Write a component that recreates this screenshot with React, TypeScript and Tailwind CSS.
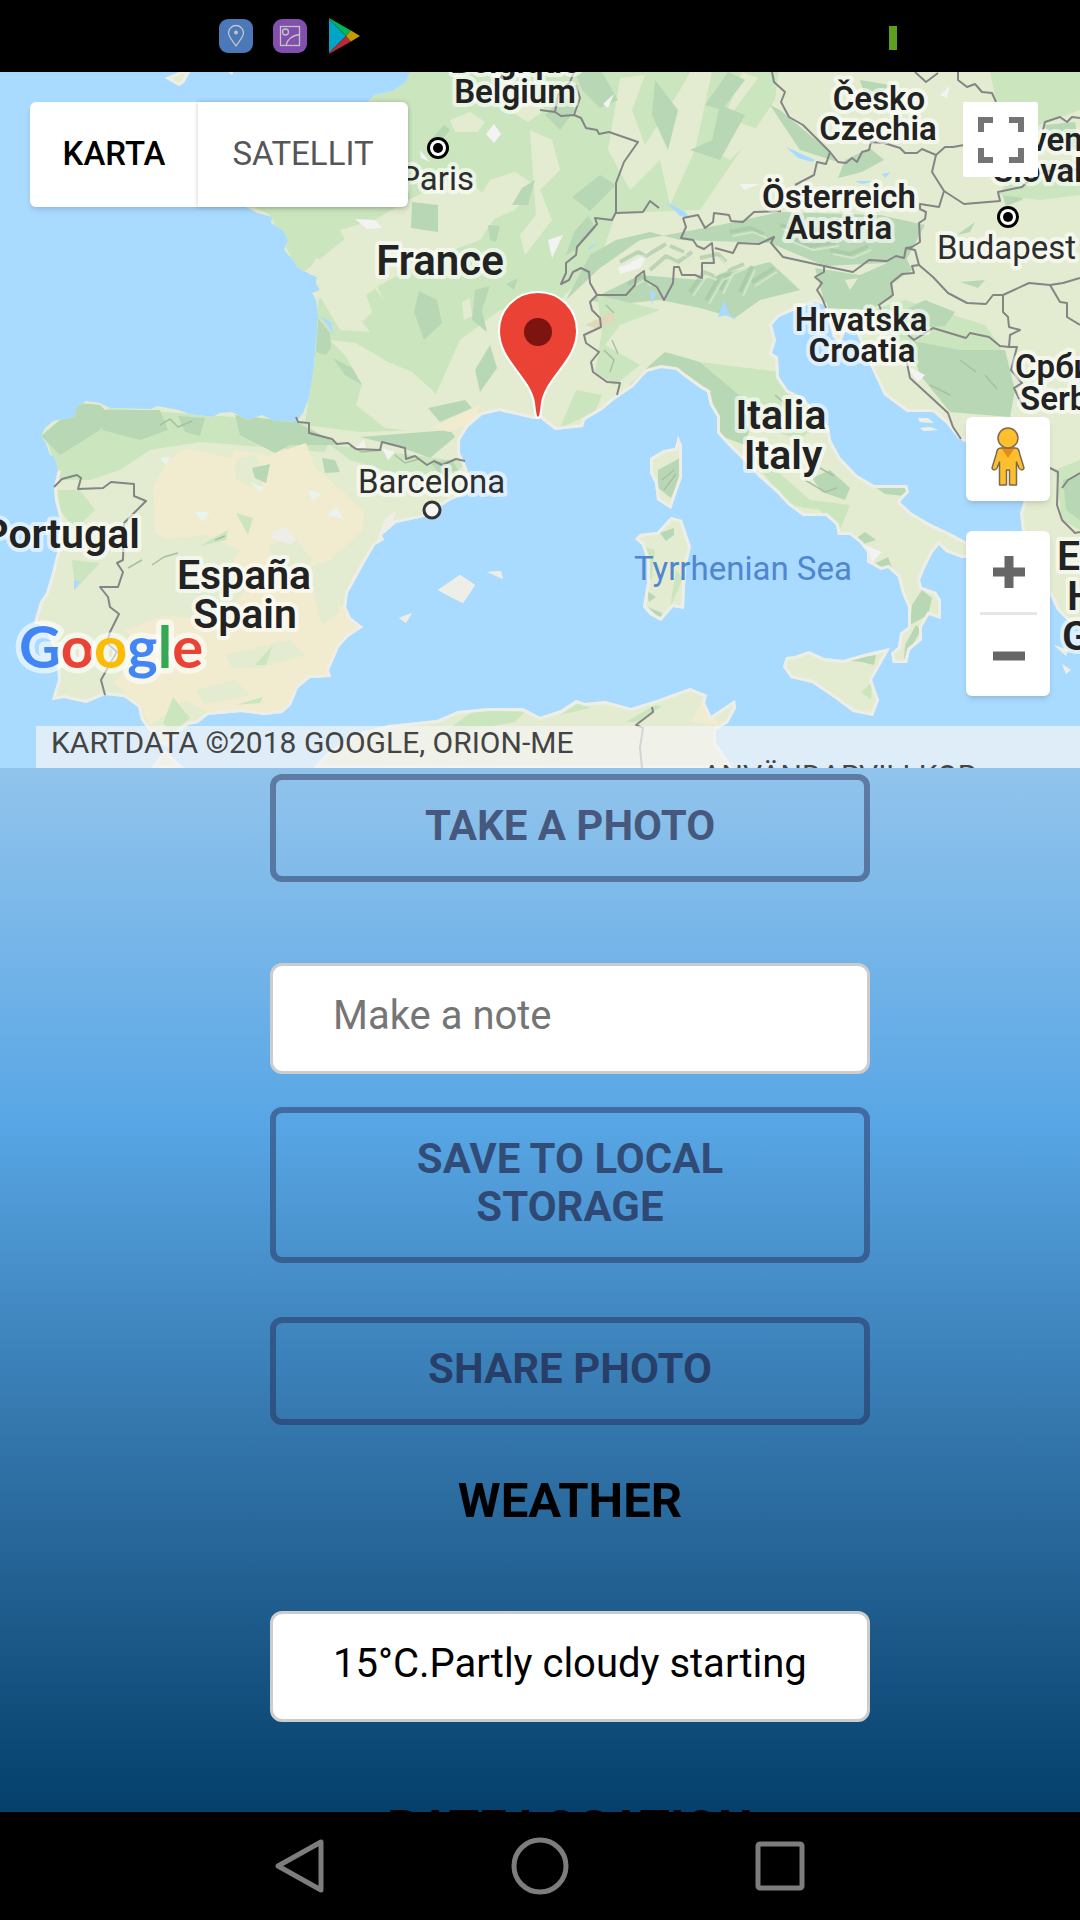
import type { ReactNode } from "react";

const SEA = "#a9daff";
const PALE = "#e3ecd0";
const GREEN = "#cbe6be";
const DARK = "#b7d7b5";
const SAND = "#f1ebcf";
const COAST = "#eeeee8";

const EUROPE =
  "410,72 406,82 393,91 375,95 367,102 340,140 290,150 230,170 220,195 246,207 257,213 272,217 271,223 284,231 288,240 284,250 293,260 298,268 312,275 317,277 316,283 320,290 312,293 316,300 318,315 317,333 315,353 314,367 310,393 308,400 303,413 296,422 275,421 262,415 248,420 232,412 219,413 213,417 189,414 179,410 157,406 151,409 110,408 100,403 86,401 76,408 75,417 53,421 45,428 41,436 46,443 50,455 55,457 58,470 54,487 55,500 60,520 57,553 52,573 46,593 40,602 34,623 45,627 57,657 58,680 52,700 64,698 86,703 105,695 124,697 138,707 141,720 151,733 157,743 169,747 179,733 188,725 198,723 208,715 241,712 265,715 282,713 291,705 298,688 310,678 331,677 329,670 339,647 348,637 363,627 351,618 346,607 348,593 365,562 375,545 384,540 382,535 396,523 424,517 451,500 468,493 470,480 467,468 460,453 460,440 468,427 482,415 499,411 517,415 534,419 540,418 555,430 583,427 585,420 602,410 614,400 633,387 647,372 661,368 676,370 685,377 700,388 707,392 710,405 717,417 717,433 728,445 743,460 759,477 776,492 788,505 803,516 826,516 836,525 838,535 850,535 860,543 867,552 867,562 881,570 888,568 898,577 902,593 908,607 908,627 900,633 898,647 891,653 893,663 907,663 910,650 922,640 922,627 929,615 941,619 941,600 936,592 922,587 920,580 924,570 933,552 939,545 946,552 962,558 980,558 980,545 967,542 950,533 929,523 912,513 900,502 909,492 907,485 874,485 857,475 840,457 831,440 829,427 815,410 802,397 788,390 779,377 778,357 772,353 776,340 772,325 779,317 795,310 815,302 824,305 828,320 833,337 840,345 845,332 857,333 864,353 871,367 878,382 884,395 907,412 933,412 946,423 958,438 967,443 1000,470 1024,501 1020,513 1022,530 1035,570 1051,597 1057,610 1067,620 1080,627 1180,627 1180,72";

const ISLANDS = [
  "678,436 682,445 682,477 671,509 657,500 655,483 650,473 650,458 664,450 675,448",
  "671,517 682,520 691,547 686,567 684,609 673,607 661,621 650,615 643,607 647,583 647,560 642,545 635,539 640,534 657,532",
  "783,667 786,657 795,656 809,651 824,658 843,660 864,654 890,648 872,680 879,700 873,716 853,712 833,697 812,683 791,678",
  "438,590 460,575 475,585 463,603 451,597",
  "399,618 412,613 406,623",
  "487,572 501,571 503,579",
  "165,78 193,66 184,83 179,86",
  "222,66 235,66 232,75",
  "151,768 165,750 184,768",
  "313,768 327,753 358,733 389,725 437,720 458,711 489,708 523,708 540,717 561,710 576,700 585,703 605,701 631,708 657,700 690,688 707,695 705,703 711,716 735,700 736,708 728,723 716,730 716,743 733,768",
  "918,418 928,418 934,423 920,422",
  "920,428 930,427 938,430 924,431",
  "1054,645 1068,650 1066,656",
  "1062,664 1071,670 1066,674",
];

const PATCHES: [string, string][] = [
  [GREEN, "410,60 640,60 780,60 775,100 700,210 616,213 600,260 560,300 500,310 460,340 420,430 360,432 305,425 315,350 318,300 350,270 372,285 384,300 350,235 300,275 270,215 240,200 370,100"],
  [PALE, "340,230 375,220 408,200 440,185 460,172 500,210 480,240 430,258 380,285 366,295 372,312 362,322 370,332 340,330 328,310 308,275 316,258 348,272 357,262"],
  [PALE, "330,340 356,343 388,362 412,372 432,390 440,400 480,372 500,402 470,430 430,433 385,428 356,405 362,384 345,355"],
  [PALE, "490,180 515,172 535,185 515,210 480,225 455,250 430,252 450,222 472,210"],
  [PALE, "530,130 552,140 560,170 540,190 552,220 525,255 520,235 536,215"],
  [PALE, "620,78 645,75 632,110 645,145 680,90 690,72 712,72 695,150 670,205 660,160 630,190 608,150"],
  [PALE, "720,130 742,72 758,78 728,118 760,130 730,160 712,150"],
  [PALE, "800,78 830,72 890,80 905,95 850,90 840,110 805,90"],
  [PALE, "872,150 936,155 932,172 944,191 920,205 885,190 862,170"],
  [PALE, "950,210 1080,200 1080,285 1050,285 1003,295 985,304 948,293 920,262 930,215"],
  [PALE, "450,120 470,112 485,122 478,132 455,132"],
  [PALE, "505,90 530,85 545,110 528,122 512,112"],
  [DARK, "575,72 602,72 618,100 600,108 582,90"],
  [DARK, "655,80 678,110 668,150 652,115"],
  [DARK, "690,150 720,160 745,115 720,105 712,140"],
  [DARK, "705,105 728,72 745,80 722,110"],
  [DARK, "600,175 616,185 590,211 572,197"],
  [DARK, "565,95 575,110 560,130 545,115"],
  [DARK, "566,255 574,232 588,216 596,228 575,250"],
  [DARK, "780,110 830,152 838,162 800,150 770,105"],
  [DARK, "845,160 870,148 884,160 862,172 838,178"],
  [DARK, "860,80 890,85 868,105"],
  [DARK, "1002,193 1030,185 1022,200 1006,206"],
  [DARK, "1045,125 1075,122 1080,150 1050,145"],
  [DARK, "412,202 438,205 438,232 411,228"],
  [DARK, "419,291 437,300 442,323 424,340 414,312"],
  [DARK, "475,290 490,286 482,310 487,332 472,320"],
  [DARK, "488,225 500,226 496,242 490,240"],
  [DARK, "475,370 490,345 497,368 480,392"],
  [DARK, "506,284 518,278 514,290"],
  [PALE, "462,302 470,298 472,316 464,320"],
  [DARK, "318,318 330,333 331,348 326,355 316,352"],
  [DARK, "333,358 352,368 362,385 345,375"],
  [DARK, "444,125 450,130 440,142 433,137"],
  [DARK, "522,188 535,180 528,205 512,205"],
  [DARK, "428,408 465,400 472,408 440,422"],
  [DARK, "566,300 590,255 616,240 650,232 680,240 770,243 825,266 905,262 925,225 880,215 780,212 720,225 640,240 600,268"],
  [DARK, "590,300 640,275 700,280 770,262 800,290 760,300 735,318 700,308 660,300 610,305"],
  [DARK, "815,268 860,275 905,255 912,270 893,283 892,298 870,310 826,308"],
  [PALE, "845,280 858,278 850,290"],
  [DARK, "620,395 650,365 665,352 700,362 740,395 712,392 680,372 650,372"],
  [DARK, "708,392 735,390 755,410 745,445 718,435"],
  [GREEN, "597,295 660,310 620,325 605,345 640,365 615,385 595,372 602,330"],
  [GREEN, "700,362 780,372 800,400 820,420 800,440 770,430 745,400"],
  [GREEN, "745,450 776,470 810,500 850,505 838,535 820,510 788,505"],
  [DARK, "812,478 830,470 850,488 845,500 822,492"],
  [GREEN, "870,310 905,300 985,325 1000,346 1010,390 960,390 915,365"],
  [DARK, "895,315 925,300 955,312 945,326 915,328"],
  [DARK, "908,340 960,350 1005,350 1015,390 1010,417 950,412 920,375"],
  [DARK, "874,486 909,488 905,496 885,494"],
  [DARK, "847,545 865,532 876,540 860,545"],
  [DARK, "872,565 888,557 892,568 880,569"],
  [DARK, "912,605 922,590 932,598 928,615 910,625"],
  [DARK, "905,645 916,625 921,630 904,660"],
  [GREEN, "560,428 576,390 602,395 595,412"],
  [DARK, "658,470 680,458 680,480 671,498 658,488"],
  [GREEN, "645,547 655,550 652,580 646,575"],
  [DARK, "646,590 656,597 649,602"],
  [DARK, "648,607 662,613 661,620"],
  [DARK, "660,533 674,528 674,535 666,541"],
  [GREEN, "676,570 683,578 670,608"],
  [DARK, "842,660 876,655 874,665 862,662"],
  [GREEN, "861,692 872,682 871,700"],
  [GREEN, "45,435 110,408 300,422 330,440 325,452 200,442 150,450 120,470 90,480 60,480"],
  [DARK, "41,436 80,403 100,405 110,415 100,430 60,455"],
  [DARK, "105,410 160,410 168,430 140,440 102,430"],
  [DARK, "178,416 205,418 200,436 185,432"],
  [DARK, "235,415 296,422 340,445 290,445 275,453 240,435"],
  [GREEN, "57,490 80,490 95,510 75,530 60,510"],
  [GREEN, "72,560 100,563 75,590"],
  [SAND, "153,487 169,460 186,448 231,458 234,450 270,455 306,443 315,467 330,480 365,513 362,530 330,560 310,567 315,600 345,607 363,627 339,650 329,675 300,682 288,710 210,714 185,700 150,725 138,705 114,683 140,650 125,630 165,615 220,622 245,590 210,555 155,533"],
  [PALE, "160,540 205,535 240,550 225,575 190,565"],
  [PALE, "268,545 295,538 312,560 300,575 275,562"],
  [PALE, "225,655 290,640 305,655 260,668 232,668"],
  [PALE, "195,690 235,680 250,695 205,704"],
  [PALE, "315,600 330,590 340,612 322,625"],
  [DARK, "322,458 335,460 340,472 325,473"],
  [DARK, "360,437 450,430 455,437 430,458 400,447"],
  [GREEN, "330,445 390,452 450,460 466,462 450,480 400,475 350,460"],
  [DARK, "430,462 452,460 458,470 440,474"],
  [SAND, "430,428 480,405 475,422 450,432"],
  [PALE, "235,460 255,455 265,475 260,490 236,480"],
  [DARK, "252,468 270,464 266,483 255,478"],
  [GREEN, "236,513 253,518 248,535"],
  [GREEN, "210,540 228,530 226,540 200,546"],
  [GREEN, "255,665 273,645 266,665"],
  [GREEN, "236,705 263,697 260,703"],
  [GREEN, "163,723 173,697 190,718 172,733"],
  [COAST, "272,532 285,527 296,540 290,544 270,537"],
  [COAST, "376,545 384,520 396,510 392,525"],
  ["#e9f5ec", "195,512 210,512 202,522"],
  ["#e9f5ec", "308,490 322,494 312,500"],
  ["#e9f5ec", "327,515 337,507 343,519"],
  ["#e9f5ec", "250,482 264,488 260,492"],
  ["#e9f5ec", "160,458 170,457 166,465"],
  ["#f3f3f3", "486,134 494,124 501,134 494,143"],
  ["#f3f3f3", "355,219 375,220 382,228 367,229"],
  ["#f3f3f3", "420,150 430,162 421,158"],
  ["#f3f3f3", "603,104 614,94 608,108"],
  ["#f3f3f3", "740,184 760,184 744,190"],
  ["#f3f3f3", "548,240 563,235 552,258"],
  ["#f3f3f3", "618,268 650,250 640,268 620,274"],
  ["#f3f3f3", "768,90 785,80 774,86"],
  ["#f3f3f3", "940,95 950,86 947,98"],
  ["#f3f3f3", "905,365 925,375 918,382"],
  ["#f3f3f3", "865,545 882,552 872,562"],
  ["#f3f3f3", "356,448 364,440 366,450"],
  ["#f3f3f3", "382,448 395,452 388,460"],
  ["#e0d8b8", "585,325 612,312 616,320 596,328"],
  [SAND, "700,706 712,700 718,725 690,722"],
  [GREEN, "440,735 475,710 525,712 515,722 470,730"],
  [GREEN, "560,715 580,702 590,708"],
  [GREEN, "626,722 655,705 662,706 640,722"],
  [GREEN, "1010,170 1080,160 1080,195 1040,200 1000,195"],
  [GREEN, "1000,120 1040,125 1080,110 1080,72 990,72"],
  [GREEN, "1055,470 1080,460 1080,530 1062,520"],
  [DARK, "1063,480 1080,475 1080,520 1066,510"],
  [DARK, "957,235 975,222 970,232"],
  [DARK, "960,282 985,280 978,288"],
];

const WATER = [
  "666,202 685,212 690,218 680,216",
  "786,147 815,160 812,162 798,158",
  "650,290 656,293 652,304",
  "718,317 724,300 728,312 736,320 726,315",
  "855,181 875,181 862,184",
  "882,174 891,172 885,178",
  "586,250 597,242 592,248",
  "320,316 331,322 334,335 326,323",
  "400,216 415,203 404,212",
  "74,580 80,582 74,590",
];

const BORDERS = [
  "540,110 555,112 561,116 574,115 581,118 586,128 597,130 599,134 609,132 638,142 624,162 616,183 616,212 612,220 595,218 597,224 577,247 576,255 566,263 566,273 561,284 569,280 573,272 581,268 589,272 590,283 597,295 590,302 592,310 600,318 601,327 584,335 586,343 599,352 591,362 593,372 607,382 620,383 617,395",
  "555,112 558,95 570,82 574,72",
  "574,115 580,98 576,85",
  "616,213 643,212 650,201 659,208",
  "683,218 698,215 705,228 713,222 714,213 729,215 731,221 743,222 754,212 781,211",
  "795,185 814,175 817,162 826,164 830,152",
  "772,72 774,82 785,92 781,102 789,117 803,125 830,152 838,162 846,163 852,158 857,162 862,152 869,150 871,142 884,143 900,148 905,153 917,153 922,149 936,155 945,147 953,147 964,145",
  "915,72 926,82 938,73",
  "958,72 958,80 967,87 975,84 982,92 992,93 996,102",
  "936,155 932,172 944,191 939,207 920,204 920,209 926,212 925,219 919,223 920,242 912,247 906,248 904,258 896,256 887,261 869,260 853,272 824,266 783,257 771,243 774,237 759,244 738,243 733,253 715,248",
  "944,191 964,204 1000,201 998,192 1022,187 1035,175 1060,168 1080,170",
  "1043,130 1045,122 1060,117 1067,122 1072,117 1080,118",
  "683,218 686,227 681,238 693,240 697,246 704,249 712,243 714,263 702,263 702,278 695,275 682,275 679,267 674,267 673,283 664,300 657,287 645,280 644,271 636,277 635,285 626,295 597,295",
  "906,248 915,250 919,265 912,266 914,273 902,274 891,283 893,295 879,305 881,310",
  "919,265 933,277 948,293 967,303 986,304 993,295 1003,295 1029,283 1050,285 1063,283 1080,278",
  "1050,285 1060,302 1067,303 1067,317 1080,325",
  "1003,295 1003,312 1008,317 1009,327 1020,330 1010,335 1009,347 1000,346 989,337 970,333 966,338 933,328 914,340 908,335",
  "1009,347 1017,347 1011,370 1022,383 1014,388 1022,405",
  "907,363 910,378 934,400 948,413 953,427 961,439",
  "824,266 824,272 815,277 822,283 817,290 822,298 826,308",
  "296,417 298,422 309,423 309,433 332,439 337,444 348,443 356,449 380,450 382,442 405,448 406,459 415,456 427,465 434,461 442,465 456,459 465,461",
  "54,487 62,479 77,475 81,478 78,489 103,488 111,482 134,484 134,496 146,501 124,523 123,560 117,563 123,572 118,587 100,587 108,597 110,607 119,614 110,632 107,643 117,652 112,660 101,680 105,695",
  "652,707 653,712 636,725 643,728 640,748 642,768",
  "1050,468 1058,472 1057,505 1062,520 1075,533 1080,532",
  "1062,488 1068,480 1080,473",
];

const ALPS =
  "M620 262l18-10 8 4 20-12M628 284l14-8 6 6M650 270l16-14 12 6 14-10M690 292l14-20 10 4M706 300l14-24 10-4M720 290l10-20 14-6M740 292l12-26M752 282l22-14M730 232l20-4 14 6M700 258l18-4 8 8M670 246l14 6M780 225l18 6 24-2M790 238l20 8 26-4M830 250l20 4 18-8";

const HILLS =
  "M604 350l10 10-4 12M606 305l8 8M612 340l6 14M350 446l12 6 20-2M395 455l10 8 14-4M160 425l10-6 8 8 14-6M775 395l14 12M805 480l20 12 12-4M820 468l14 8M930 385l20 10M960 360l16 12M985 375l12 14M662 480l12-10M664 490l12-16M152 565l12-8 14-4M128 568l14-8M215 540l10-4";

type Label = { x: number; y: number; size: number; text: string; bold?: boolean; anchor?: "start" | "middle" | "end" };

const LABELS: Label[] = [
  { x: 515, y: 73, size: 33, text: "Belgique", bold: true, anchor: "middle" },
  { x: 515, y: 103, size: 33, text: "Belgium", bold: true, anchor: "middle" },
  { x: 879, y: 110, size: 33, text: "Česko", bold: true, anchor: "middle" },
  { x: 878, y: 140, size: 33, text: "Czechia", bold: true, anchor: "middle" },
  { x: 983, y: 151, size: 33, text: "Slovensko", bold: true },
  { x: 993, y: 182, size: 33, text: "Slovakia", bold: true },
  { x: 839, y: 208, size: 33, text: "Österreich", bold: true, anchor: "middle" },
  { x: 839, y: 239, size: 33, text: "Austria", bold: true, anchor: "middle" },
  { x: 861, y: 331, size: 33, text: "Hrvatska", bold: true, anchor: "middle" },
  { x: 862, y: 362, size: 33, text: "Croatia", bold: true, anchor: "middle" },
  { x: 1015, y: 378, size: 33, text: "Србија", bold: true },
  { x: 1020, y: 410, size: 33, text: "Serbia", bold: true },
  { x: 440, y: 275, size: 42, text: "France", bold: true, anchor: "middle" },
  { x: 781, y: 429, size: 41, text: "Italia", bold: true, anchor: "middle" },
  { x: 783, y: 469, size: 41, text: "Italy", bold: true, anchor: "middle" },
  { x: 140, y: 548, size: 41, text: "Portugal", bold: true, anchor: "end" },
  { x: 244, y: 589, size: 41, text: "España", bold: true, anchor: "middle" },
  { x: 245, y: 628, size: 41, text: "Spain", bold: true, anchor: "middle" },
  { x: 1057, y: 570, size: 41, text: "Ελλάδα", bold: true },
  { x: 1067, y: 610, size: 41, text: "Hellas", bold: true },
  { x: 1062, y: 650, size: 41, text: "Greece", bold: true },
  { x: 474, y: 190, size: 33, text: "Paris", anchor: "end" },
  { x: 937, y: 259, size: 33, text: "Budapest" },
  { x: 358, y: 493, size: 33, text: "Barcelona" },
];

function Capital({ x, y }: { x: number; y: number }) {
  return (
    <g>
      <circle cx={x} cy={y} r="11" fill="#000" />
      <circle cx={x} cy={y} r="8" fill="#fff" />
      <circle cx={x} cy={y} r="5" fill="#000" />
    </g>
  );
}

function MapCanvas() {
  return (
    <svg viewBox="0 72 1080 696" preserveAspectRatio="xMidYMid slice" className="block h-full w-full" role="img" aria-label="Map of southern Europe">
      <defs>
        <clipPath id="land">
          <polygon points={EUROPE} />
          {ISLANDS.map((p) => (
            <polygon key={p} points={p} />
          ))}
        </clipPath>
      </defs>
      <rect x="0" y="72" width="1080" height="696" fill={SEA} />
      <g fill={PALE}>
        <polygon points={EUROPE} />
        {ISLANDS.map((p) => (
          <polygon key={p} points={p} />
        ))}
      </g>
      <g clipPath="url(#land)">
        {PATCHES.map(([fill, p]) => (
          <polygon key={p} points={p} fill={fill} />
        ))}
        <path d={ALPS} fill="none" stroke="#a3c4a2" strokeWidth="4" strokeLinejoin="round" opacity="0.6" />
        <path d={ALPS} transform="translate(3 4)" fill="none" stroke="#dcebd2" strokeWidth="2" opacity="0.7" />
        <path d={HILLS} fill="none" stroke="#a9bfa4" strokeWidth="1.5" />
        <g fill="none" stroke={COAST} strokeWidth="6">
          <polyline points={EUROPE.slice(EUROPE.indexOf("58,470"))} />
          {ISLANDS.map((p) => (
            <polygon key={p} points={p} />
          ))}
        </g>
        {WATER.map((p) => (
          <polygon key={p} points={p} fill={SEA} />
        ))}
      </g>
      <polygon points={ISLANDS[3]} fill={COAST} />
      <g fill="none" stroke="#858585" strokeWidth="2" strokeLinejoin="round">
        {BORDERS.map((p) => (
          <polyline key={p} points={p} />
        ))}
      </g>
      <Capital x={438} y={148} />
      <Capital x={1008} y={217} />
      <circle cx="432" cy="510" r="8" fill="#f5f5f5" stroke="#333" strokeWidth="3" />
      <g fontFamily="Roboto, sans-serif" strokeLinejoin="round">
        {LABELS.map((l) => (
          <text
            key={l.text}
            x={l.x}
            y={l.y}
            fontSize={l.size}
            fontWeight={l.bold ? 600 : 400}
            textAnchor={l.anchor ?? "start"}
            fill={l.bold ? "#222" : "#2e2e2e"}
            stroke="#fff"
            strokeOpacity="0.6"
            strokeWidth="8"
            paintOrder="stroke"
          >
            {l.text}
          </text>
        ))}
        <text x="634" y="580" fontSize="33" fill="#4f86cf">
          Tyrrhenian Sea
        </text>
      </g>
      <path
        d="M538 418C535 418 535 410 534 403C530 377 499 361 499 331C499 309 516 292 538 292C560 292 577 309 577 331C577 361 546 377 542 403C541 410 541 418 538 418Z"
        fill="#ea4335"
        stroke="#fff"
        strokeWidth="2"
      />
      <circle cx="538" cy="332" r="14" fill="#7d1410" />
      <text x="19" y="668" fontFamily="Lato, sans-serif" fontSize="58" fontWeight="700" stroke="#fff" strokeOpacity="0.6" strokeWidth="11" strokeLinejoin="round" paintOrder="stroke">
        <tspan fill="#4285f4">G</tspan>
        <tspan fill="#ea4335">o</tspan>
        <tspan fill="#fbbc05">o</tspan>
        <tspan fill="#4285f4">g</tspan>
        <tspan fill="#34a853">l</tspan>
        <tspan fill="#ea4335">e</tspan>
      </text>
    </svg>
  );
}

function StatusBar() {
  return (
    <header className="flex h-[72px] shrink-0 items-center justify-between bg-black pr-[183px] pl-[219px]">
      <div className="flex items-center gap-5">
        <svg width="34" height="34" viewBox="0 0 34 34" aria-hidden="true">
          <rect width="34" height="34" rx="9" fill="#4a78b8" />
          <path d="M17 27C14 22 9.500 18 9.500 14A7.500 7.500 0 0 1 24.500 14C24.500 18 20 22 17 27Z" fill="none" stroke="#c4c4c4" strokeWidth="1.300" />
          <circle cx="17" cy="13.500" r="2" fill="#c4c4c4" />
        </svg>
        <svg width="34" height="34" viewBox="0 0 34 34" aria-hidden="true">
          <rect width="34" height="34" rx="9" fill="#824fae" />
          <rect x="7.500" y="7.500" width="19" height="19" fill="none" stroke="#c4c4c4" strokeWidth="1.300" />
          <circle cx="12.500" cy="13" r="3" fill="none" stroke="#c4c4c4" strokeWidth="1.300" />
          <path d="M13 26.500C14.500 20 19 16.500 26.500 15.500" fill="none" stroke="#c4c4c4" strokeWidth="1.300" />
        </svg>
        <svg width="34" height="36" viewBox="0 0 34 36" aria-hidden="true">
          <path d="M2 1V35L19 18Z" fill="#00a5c5" />
          <path d="M2 0L24 12.500L19 18L2 1Z" fill="#00b45a" />
          <path d="M2 35V36L24 23.500L19 18Z" fill="#b92a3a" />
          <path d="M24 12.500L33 18L24 23.500L19 18Z" fill="#c49b00" />
        </svg>
      </div>
      <div className="mt-1 h-6 w-2 bg-[#5f9f1f]" role="img" aria-label="Battery level" />
    </header>
  );
}

function OutlineButton({ children }: { children: ReactNode }) {
  return (
    <button
      type="button"
      className="w-[600px] max-w-full rounded-xl border-[6px] border-[#23234c]/45 px-20 pt-[22px] pb-[26px] text-[42px] leading-[48px] font-bold text-[#1b1232]/60 uppercase"
    >
      {children}
    </button>
  );
}

const FIELD =
  "h-[111px] w-[600px] max-w-full rounded-xl border-[3px] border-[#ccc] bg-white px-[60px] pb-1.5 text-[40px] text-black placeholder:text-[#757575]";

export default function App() {
  return (
    <div className="flex h-screen w-full flex-col overflow-hidden bg-black font-[Roboto,sans-serif]">
      <StatusBar />
      <section className="relative h-[696px] w-full shrink-0 overflow-hidden" aria-label="Map">
        <MapCanvas />
        <div className="absolute top-[30px] left-[30px] flex h-[105px] rounded-md bg-white text-[33px] shadow-md">
          <button type="button" className="w-[168px] rounded-l-md pb-0.5 font-medium text-black">
            KARTA
          </button>
          <button type="button" className="w-[210px] rounded-r-md pb-0.5 text-[#565656] shadow-[0_0_5px_rgba(0,0,0,0.2)]">
            SATELLIT
          </button>
        </div>
        <button type="button" aria-label="Toggle fullscreen" className="absolute top-[30px] right-[42px] flex size-[75px] items-center justify-center rounded-xs bg-white">
          <svg width="46" height="46" viewBox="0 0 46 46" fill="none" stroke="#747474" strokeWidth="6">
            <path d="M3 15V3H15M31 3H43V15M43 31V43H31M15 43H3V31" />
          </svg>
        </button>
        <button type="button" aria-label="Street View" className="absolute top-[345px] right-[30px] flex h-[84px] w-[84px] items-center justify-center rounded-md bg-white pb-1 shadow-md">
          <svg width="34" height="60" viewBox="0 0 34 60" fill="#fdbf2d" stroke="#7b6a4c" strokeWidth="1.500" strokeLinejoin="round">
            <path d="M10 21H24C28 21 28 24 29 28L33 41C32 44 29 43 28 41L25.500 35V58H18.500V43H15.500V58H8.500V35L6 41C5 43 2 44 1 41L5 28C6 24 6 21 10 21Z" />
            <path d="M11 22H23L17 31Z" fill="#e58a1f" stroke="none" />
            <circle cx="17" cy="11" r="10" />
          </svg>
        </button>
        <div className="absolute top-[459px] right-[30px] flex w-[84px] flex-col items-center rounded-md bg-white shadow-md">
          <button type="button" aria-label="Zoom in" className="flex h-[81px] w-full items-center justify-center pl-0.5">
            <svg width="32" height="32" viewBox="0 0 32 32" fill="none" stroke="#666" strokeWidth="9">
              <path d="M16 0V32M0 16H32" />
            </svg>
          </button>
          <div className="h-[3px] w-[57px] bg-[#e6e6e6]" />
          <button type="button" aria-label="Zoom out" className="flex h-[81px] w-full items-center justify-center pl-0.5">
            <svg width="32" height="32" viewBox="0 0 32 32" fill="none" stroke="#666" strokeWidth="9">
              <path d="M0 16H32" />
            </svg>
          </button>
        </div>
        <div className="absolute right-0 bottom-0 left-9 h-[42px] overflow-hidden bg-[#f5f5f5]/70 text-[30px] leading-[33px] text-[#444]">
          <p className="pl-[15px]">KARTDATA ©2018 GOOGLE, ORION-ME</p>
          <a href="#terms" className="block pl-[666px]">
            ANVÄNDARVILLKOR
          </a>
        </div>
      </section>

      <main className="min-h-0 flex-1 overflow-hidden bg-linear-to-b from-[#91c4ec] via-[#58a6e5] via-34% to-[#04406b]">
        <div className="ml-[60px] flex flex-col items-center pt-1.5">
          <OutlineButton>Take a photo</OutlineButton>
          <input type="text" aria-label="Note" placeholder="Make a note" className={`${FIELD} mt-[81px] mb-[33px]`} />
          <OutlineButton>Save to local storage</OutlineButton>
          <div className="h-[54px]" />
          <OutlineButton>Share photo</OutlineButton>
          <h2 className="mt-[46px] text-[49px] leading-[60px] font-bold text-black">WEATHER</h2>
          <input type="text" aria-label="Weather" readOnly value="15°C.Partly cloudy starting" className={`${FIELD} mt-20`} />
          <h2 className="mt-[76px] text-[49px] leading-[60px] font-bold whitespace-nowrap text-black">RATE LOCATION</h2>
        </div>
      </main>

      <nav className="flex h-[108px] shrink-0 items-center justify-center bg-black" aria-label="System navigation">
        <button type="button" aria-label="Back" className="flex w-60 justify-center">
          <svg width="50" height="56" viewBox="0 0 50 56" fill="none" stroke="#7d7d7d" strokeWidth="5" strokeLinejoin="round">
            <path d="M46 4V52L3 28Z" />
          </svg>
        </button>
        <button type="button" aria-label="Home" className="flex w-60 justify-center">
          <svg width="58" height="58" viewBox="0 0 58 58" fill="none" stroke="#7d7d7d" strokeWidth="5">
            <circle cx="29" cy="29" r="26" />
          </svg>
        </button>
        <button type="button" aria-label="Recent apps" className="flex w-60 justify-center">
          <svg width="50" height="50" viewBox="0 0 50 50" fill="none" stroke="#7d7d7d" strokeWidth="5">
            <rect x="3" y="3" width="44" height="44" rx="2" />
          </svg>
        </button>
      </nav>
    </div>
  );
}
